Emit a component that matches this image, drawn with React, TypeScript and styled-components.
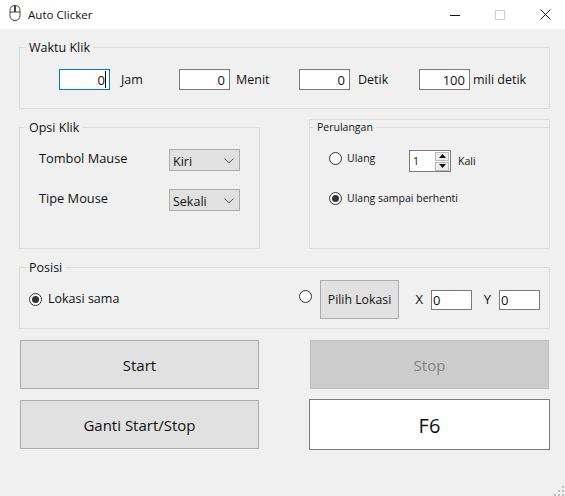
import { createGlobalStyle, styled } from 'styled-components';

const GlobalStyle = createGlobalStyle`
  html, body {
    margin: 0;
    padding: 0;
    background: #f0f0f0;
  }
  * {
    box-sizing: border-box;
  }
  body {
    font-family: "Open Sans", "Noto Sans", sans-serif;
    color: #111;
    overflow: hidden;
  }
`;

const Radio = ({ on }: { on?: boolean }) => <RadioMark $on={on} />;

const MouseIcon = () => (
  <svg width="12" height="16" viewBox="0 0 12 16" fill="none" stroke="#444" strokeWidth="1">
    <path d="M6 .5C2.500.5 1 2.500 1 5.500v5c0 3 2 5 5 5s5-2 5-5v-5C11 2.500 9.500.5 6 .5Z" />
    <path d="M1 7h10" />
    <rect x="5" y="1" width="2" height="6" fill="#444" stroke="none" />
  </svg>
);

const Chevron = () => (
  <svg width="10" height="6" viewBox="0 0 10 6" fill="none" stroke="#555" strokeWidth="1">
    <path d="M.5.500 5 5 9.500.5" />
  </svg>
);

const App = () => {
  return (
    <Window>
      <GlobalStyle />
      <TitleBar>
        <TitleIcon>
          <MouseIcon />
        </TitleIcon>
        <TitleText>Auto Clicker</TitleText>
        <WinButtons>
          <WinButton>
            <svg width="10" height="10" viewBox="0 0 10 10" stroke="#111">
              <path d="M0 5.500h10" />
            </svg>
          </WinButton>
          <WinButton>
            <svg width="10" height="10" viewBox="0 0 10 10" fill="none" stroke="#ccc">
              <rect x=".5" y=".5" width="9" height="9" />
            </svg>
          </WinButton>
          <CloseButton>
            <svg width="11" height="11" viewBox="0 0 11 11" stroke="#111">
              <path d="M.5.500l10 10M10.500.500l-10 10" />
            </svg>
          </CloseButton>
        </WinButtons>
      </TitleBar>

      <Content>
        <Group>
          <Legend>Waktu Klik</Legend>
          <TimeRow>
            <TimeCell>
              <CaretWrap>
                <TimeInput $focused value="0" readOnly />
                <Caret />
              </CaretWrap>
              <TimeLabel $gap={11}>Jam</TimeLabel>
            </TimeCell>
            <TimeCell>
              <TimeInput value="0" readOnly />
              <TimeLabel $gap={6}>Menit</TimeLabel>
            </TimeCell>
            <TimeCell>
              <TimeInput value="0" readOnly />
              <TimeLabel $gap={8}>Detik</TimeLabel>
            </TimeCell>
            <TimeCell>
              <TimeInput value="100" readOnly />
              <TimeLabel $gap={3}>mili detik</TimeLabel>
            </TimeCell>
          </TimeRow>
        </Group>

        <MiddleRow>
          <OptionsGroup>
            <Legend>Opsi Klik</Legend>
            <OptionList>
              <OptionRow>
                <OptionLabel>Tombol Mause</OptionLabel>
                <Combo>
                  Kiri
                  <Chevron />
                </Combo>
              </OptionRow>
              <OptionRow>
                <OptionLabel>Tipe Mouse</OptionLabel>
                <Combo>
                  Sekali
                  <Chevron />
                </Combo>
              </OptionRow>
            </OptionList>
          </OptionsGroup>

          <LoopPanel>
            <LoopGroup>
              <SmallLegend>Perulangan</SmallLegend>
              <LoopList>
                <LoopRow>
                  <Radio />
                  <SmallLabel>Ulang</SmallLabel>
                  <Spinner>
                    1
                    <SpinButtons>
                      <SpinButton>
                        <svg width="7" height="4" viewBox="0 0 7 4" fill="#111">
                          <path d="M3.500 0 7 4H0Z" />
                        </svg>
                      </SpinButton>
                      <SpinButton>
                        <svg width="7" height="4" viewBox="0 0 7 4" fill="#111">
                          <path d="M0 0h7L3.500 4Z" />
                        </svg>
                      </SpinButton>
                    </SpinButtons>
                  </Spinner>
                  <KaliLabel>Kali</KaliLabel>
                </LoopRow>
                <LoopRow>
                  <Radio on />
                  <SmallLabel>Ulang sampai berhenti</SmallLabel>
                </LoopRow>
              </LoopList>
            </LoopGroup>
          </LoopPanel>
        </MiddleRow>

        <Group>
          <Legend>Posisi</Legend>
          <PositionRow>
            <SameSpot>
              <Radio on />
              <span>Lokasi sama</span>
            </SameSpot>
            <PickSpot>
              <PickRadio>
                <Radio />
              </PickRadio>
              <PickButton>Pilih Lokasi</PickButton>
              <AxisLabel $width={32}>X</AxisLabel>
              <AxisInput value="0" readOnly />
              <AxisLabel $width={27}>Y</AxisLabel>
              <AxisInput value="0" readOnly />
            </PickSpot>
          </PositionRow>
        </Group>

        <ActionGrid>
          <ActionButton>Start</ActionButton>
          <ActionButton $disabled>Stop</ActionButton>
          <ActionButton>Ganti Start/Stop</ActionButton>
          <HotkeyBox>F6</HotkeyBox>
        </ActionGrid>
      </Content>

      <Grip>
        <svg width="10" height="10" viewBox="0 0 10 10" fill="#bdbdbd">
          <rect x="8" y="0" width="2" height="2" />
          <rect x="4" y="4" width="2" height="2" />
          <rect x="8" y="4" width="2" height="2" />
          <rect x="0" y="8" width="2" height="2" />
          <rect x="4" y="8" width="2" height="2" />
          <rect x="8" y="8" width="2" height="2" />
        </svg>
      </Grip>
    </Window>
  );
};

const Window = styled.div`
  position: relative;
  width: 565px;
  height: 496px;
  background: #f0f0f0;
  overflow: hidden;
`;

const TitleBar = styled.header`
  display: flex;
  align-items: center;
  height: 29px;
  background: #fff;
  padding-left: 9px;
`;

const TitleIcon = styled.div`
  display: flex;
  width: 19px;
  margin-top: -3px;
`;

const TitleText = styled.div`
  font-size: 11.6px;
  flex: 1;
`;

const WinButtons = styled.div`
  display: flex;
  margin-right: -3px;
`;

const WinButton = styled.div`
  display: flex;
  align-items: center;
  justify-content: center;
  width: 45px;
  height: 29px;
`;

const CloseButton = styled(WinButton)`
  width: 46px;
`;

const Content = styled.main`
  padding: 11px 15px 0 19px;
`;

const Group = styled.fieldset`
  margin: 0;
  padding: 0;
  width: 531px;
  height: 69px;
  border: 1px solid #dcdcdc;
`;

const Legend = styled.legend`
  margin-left: 6px;
  padding: 0 3px;
  font-size: 12.5px;
  line-height: 15px;
  height: 15px;
`;

const SmallLegend = styled(Legend)`
  margin-left: 4px;
  font-size: 10.5px;
`;

const TimeRow = styled.div`
  display: grid;
  grid-template-columns: repeat(4, 120px);
  padding: 14px 0 0 39px;
`;

const TimeCell = styled.div`
  display: flex;
  align-items: center;
`;

const CaretWrap = styled.div`
  position: relative;
  display: flex;
`;

const TimeInput = styled.input<{ $focused?: boolean }>`
  width: 51px;
  height: 21px;
  padding: 0 4px 0 0;
  border: 1px solid ${(p) => (p.$focused ? '#0078d7' : '#7a7a7a')};
  background: #fff;
  color: #111;
  font: 13px "Open Sans", sans-serif;
  text-align: right;
  outline: none;
`;

const Caret = styled.span`
  position: absolute;
  top: 2px;
  right: 4px;
  width: 1px;
  height: 17px;
  background: #000;
`;

const TimeLabel = styled.span<{ $gap: number }>`
  margin-left: ${(p) => p.$gap}px;
  font-size: 12.5px;
  white-space: nowrap;
`;

const MiddleRow = styled.div`
  display: flex;
  align-items: flex-start;
  gap: 49px;
  margin-top: 10px;
  margin-bottom: 11px;
`;

const OptionsGroup = styled(Group)`
  width: 241px;
  height: 129px;
  margin-top: 1px;
`;

const OptionList = styled.div`
  display: flex;
  flex-direction: column;
  gap: 18px;
  padding: 14px 0 0 19px;
`;

const OptionRow = styled.div`
  display: flex;
`;

const OptionLabel = styled.span`
  width: 130px;
  font-size: 12.8px;
  line-height: 18px;
`;

const Combo = styled.div`
  display: flex;
  align-items: center;
  justify-content: space-between;
  width: 71px;
  height: 22px;
  padding: 2px 5px 0 3px;
  border: 1px solid #adadad;
  background: #e1e1e1;
  font-size: 12.5px;
`;

const LoopPanel = styled.div`
  width: 241px;
  height: 130px;
  border: 1px solid #dcdcdc;
`;

const LoopGroup = styled.fieldset`
  margin: 0;
  padding: 0;
  height: 100%;
  border: 0;
  border-top: 1px solid #dcdcdc;
`;

const LoopList = styled.div`
  display: flex;
  flex-direction: column;
  gap: 18px;
  padding: 15px 0 0 19px;
`;

const LoopRow = styled.div`
  display: flex;
  align-items: flex-start;
  height: 22px;
`;

const RadioMark = styled.span<{ $on?: boolean }>`
  display: flex;
  align-items: center;
  justify-content: center;
  flex: none;
  width: 13px;
  height: 13px;
  margin-top: 2px;
  border: 1px solid #333;
  border-radius: 50%;
  background: #fff;

  &::after {
    content: '';
    display: ${(p) => (p.$on ? 'block' : 'none')};
    width: 7px;
    height: 7px;
    border-radius: 50%;
    background: #333;
  }
`;

const SmallLabel = styled.span`
  margin-left: 5px;
  width: 62px;
  font-size: 10.5px;
  line-height: 16px;
  white-space: nowrap;
`;

const Spinner = styled.div`
  display: flex;
  align-items: center;
  justify-content: space-between;
  width: 42px;
  height: 22px;
  padding: 0 1px 0 3px;
  border: 1px solid #7a7a7a;
  background: #fff;
  font-size: 10.5px;
`;

const SpinButtons = styled.div`
  display: flex;
  flex-direction: column;
  gap: 1px;
`;

const SpinButton = styled.div`
  display: flex;
  align-items: center;
  justify-content: center;
  width: 14px;
  height: 9px;
  border: 1px solid #bbb;
  background: #ececec;
`;

const KaliLabel = styled.span`
  margin: 1px 0 0 7px;
  font-size: 10.5px;
  line-height: 20px;
`;

const PositionRow = styled.div`
  display: flex;
  justify-content: space-between;
  padding: 5px 9px 0 9px;
`;

const SameSpot = styled.div`
  display: flex;
  align-items: center;
  gap: 6px;
  height: 18px;
  margin-top: 9px;
  font-size: 12.5px;
`;

const PickSpot = styled.div`
  display: flex;
  align-items: center;
  height: 39px;
`;

const PickRadio = styled.div`
  display: flex;
  margin-top: -8px;
`;

const PickButton = styled.div`
  display: flex;
  align-items: center;
  justify-content: center;
  width: 79px;
  height: 39px;
  margin-left: 8px;
  border: 1px solid #adadad;
  background: #e1e1e1;
  font-size: 12.3px;
`;

const AxisLabel = styled.span<{ $width: number }>`
  width: ${(p) => p.$width}px;
  text-align: right;
  padding-right: 8px;
  margin-top: -2px;
  font-size: 13px;
`;

const AxisInput = styled.input`
  width: 41px;
  height: 20px;
  padding: 0 0 0 1px;
  margin-top: 1px;
  border: 1px solid #7a7a7a;
  background: #fff;
  color: #111;
  font: 13px "Open Sans", sans-serif;
  outline: none;
`;

const ActionGrid = styled.div`
  display: grid;
  grid-template-columns: 240px 241px;
  grid-template-rows: 49px 51px;
  column-gap: 50px;
  row-gap: 10px;
  margin-top: 11px;
`;

const ActionButton = styled.div<{ $disabled?: boolean }>`
  display: flex;
  align-items: center;
  justify-content: center;
  height: 49px;
  margin-left: 1px;
  margin-right: ${(p) => (p.$disabled ? '1px' : '0')};
  border: 1px solid ${(p) => (p.$disabled ? '#bfbfbf' : '#adadad')};
  background: ${(p) => (p.$disabled ? '#cccccc' : '#e1e1e1')};
  color: ${(p) => (p.$disabled ? '#838383' : '#111')};
  font-size: 15px;

  &:nth-child(3) {
    margin-top: 1px;
  }
`;

const HotkeyBox = styled.div`
  display: flex;
  align-items: center;
  justify-content: center;
  padding-top: 2px;
  border: 1px solid #7a7a7a;
  background: #fff;
  font-size: 20px;
`;

const Grip = styled.div`
  position: absolute;
  right: 1px;
  bottom: 0;
  display: flex;
`;

export default App;
